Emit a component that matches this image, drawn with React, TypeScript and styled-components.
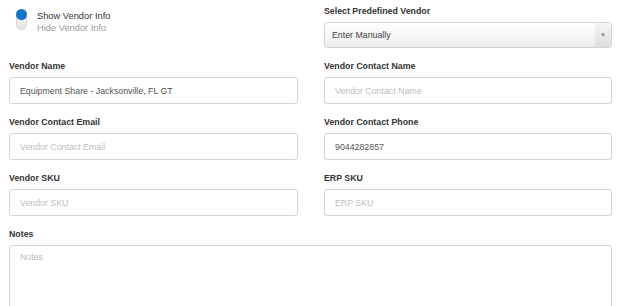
import React from "react";
import styled, { createGlobalStyle } from "styled-components";

const Global = createGlobalStyle`
  html, body { margin: 0; padding: 0; background: #fff; }
  body { font-family: "Liberation Sans", Arial, sans-serif; }
  * { box-sizing: border-box; }
`;

const Page = styled.div`
  width: 624px;
  height: 306px;
  overflow: hidden;
  padding: 4px 12px 0 9px;
`;

const Grid = styled.div`
  display: grid;
  grid-template-columns: 289px 288px;
  column-gap: 26px;
  row-gap: 11px;
`;

const Field = styled.div<{ $wide?: boolean }>`
  display: flex;
  flex-direction: column;
  ${(p) => (p.$wide ? "grid-column: 1 / -1;" : "")}
`;

const Label = styled.label`
  font-size: 8.8px;
  line-height: 15px;
  font-weight: bold;
  color: #333;
  margin-bottom: 3px;
`;

const Input = styled.input`
  height: 27px;
  width: 100%;
  border: 1px solid #d4d4d4;
  border-radius: 3px;
  padding: 0 10px;
  font-family: "Liberation Sans", Arial, sans-serif;
  font-size: 8.8px;
  color: #555;
  background: #fff;
  outline: none;
  &::placeholder { color: #bdbdbd; }
`;

const TextArea = styled.textarea`
  height: 90px;
  width: 100%;
  border: 1px solid #d4d4d4;
  border-radius: 3px;
  padding: 6px 10px;
  font-family: "Liberation Sans", Arial, sans-serif;
  font-size: 8.8px;
  color: #555;
  resize: none;
  outline: none;
  &::placeholder { color: #bdbdbd; }
`;

const Select = styled.div`
  height: 26px;
  display: flex;
  align-items: center;
  justify-content: space-between;
  border: 1px solid #d4d4d4;
  border-radius: 3px;
  background: linear-gradient(#ffffff 0%, #f7f7f7 50%, #ececec 100%);
  padding-left: 7px;
  font-size: 8.8px;
  color: #444;
  overflow: hidden;
`;

const Arrow = styled.div`
  width: 16px;
  height: 100%;
  display: flex;
  align-items: center;
  justify-content: center;
  background: linear-gradient(#f6f6f6, #dedede);
  color: #888;
  font-size: 6px;
`;

const ToggleRow = styled.div`
  display: flex;
  align-items: flex-start;
  gap: 10px;
  padding: 5px 0 0 7px;
`;

const Track = styled.div`
  width: 11px;
  height: 21px;
  border-radius: 6px;
  border: 1px solid #d6d6d6;
  background: linear-gradient(#f4f4f4, #e6e6e6);
  position: relative;
`;

const Knob = styled.div`
  position: absolute;
  top: -1px;
  left: -1px;
  width: 11px;
  height: 11px;
  border-radius: 50%;
  background: #1674c6;
`;

const ToggleText = styled.div`
  display: flex;
  flex-direction: column;
  padding-top: 1px;
`;

const Option = styled.span<{ $active?: boolean }>`
  font-size: 9.3px;
  line-height: 12px;
  color: ${(p) => (p.$active ? "#333" : "#9a9a9a")};
`;

export default function App() {
  return (
    <>
      <Global />
      <Page>
        <Grid>
          <ToggleRow>
            <Track>
              <Knob />
            </Track>
            <ToggleText>
              <Option $active>Show Vendor Info</Option>
              <Option>Hide Vendor Info</Option>
            </ToggleText>
          </ToggleRow>
          <Field>
            <Label>Select Predefined Vendor</Label>
            <Select>
              <span>Enter Manually</span>
              <Arrow>▼</Arrow>
            </Select>
          </Field>
          <Field>
            <Label>Vendor Name</Label>
            <Input defaultValue="Equipment Share - Jacksonville, FL GT" />
          </Field>
          <Field>
            <Label>Vendor Contact Name</Label>
            <Input placeholder="Vendor Contact Name" />
          </Field>
          <Field>
            <Label>Vendor Contact Email</Label>
            <Input placeholder="Vendor Contact Email" />
          </Field>
          <Field>
            <Label>Vendor Contact Phone</Label>
            <Input defaultValue="9044282857" />
          </Field>
          <Field>
            <Label>Vendor SKU</Label>
            <Input placeholder="Vendor SKU" />
          </Field>
          <Field>
            <Label>ERP SKU</Label>
            <Input placeholder="ERP SKU" />
          </Field>
          <Field $wide>
            <Label>Notes</Label>
            <TextArea placeholder="Notes" />
          </Field>
        </Grid>
      </Page>
    </>
  );
}
